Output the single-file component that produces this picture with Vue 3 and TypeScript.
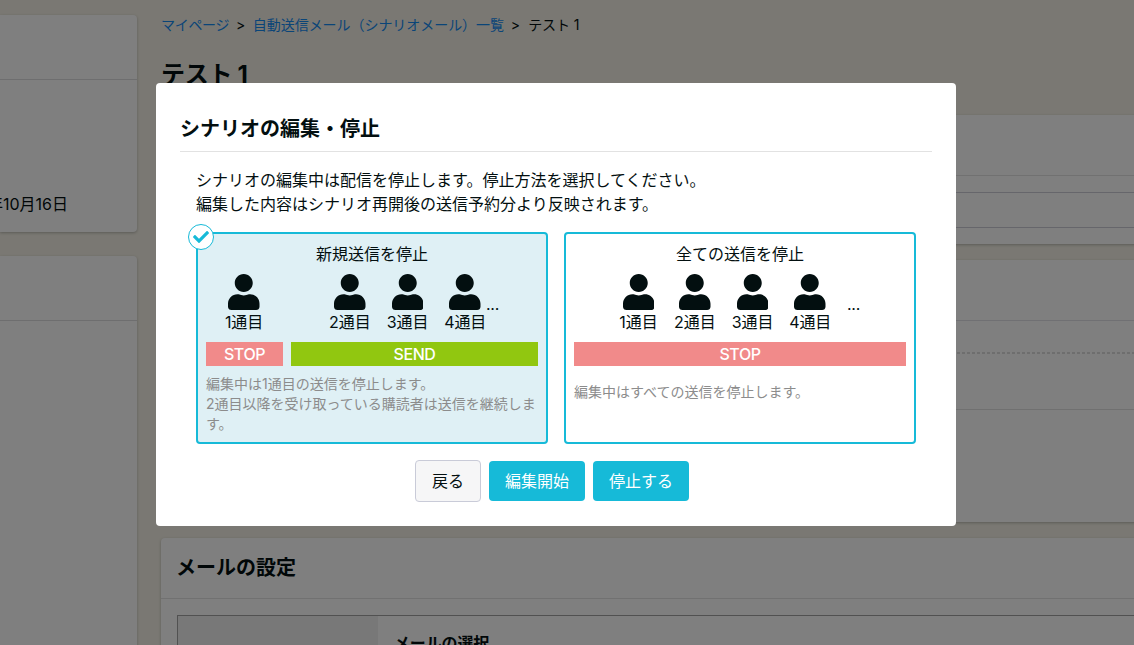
<script setup lang="ts">
interface StopOption {
  title: string
  note: string
  selected: boolean
  groups: { steps: number[]; bar: string; kind: 'stop' | 'send'; dots: boolean }[]
}

const options: StopOption[] = [
  {
    title: '新規送信を停止',
    note: '編集中は1通目の送信を停止します。\n2通目以降を受け取っている購読者は送信を継続します。',
    selected: true,
    groups: [
      { steps: [1], bar: 'STOP', kind: 'stop', dots: false },
      { steps: [2, 3, 4], bar: 'SEND', kind: 'send', dots: true },
    ],
  },
  {
    title: '全ての送信を停止',
    note: '編集中はすべての送信を停止します。',
    selected: false,
    groups: [{ steps: [1, 2, 3, 4], bar: 'STOP', kind: 'stop', dots: true }],
  },
]
</script>

<template>
  <div class="page">
    <aside class="sidebar">
      <section class="card side-first">
        <div class="side-head"></div>
        <p class="date">年10月16日</p>
      </section>
      <section class="card side-second">
        <div class="side-head"></div>
      </section>
    </aside>

    <main class="main">
      <nav class="crumbs">
        <a class="home">マイページ</a><span class="sep">&gt;</span><a class="list">自動送信メール（シナリオメール）一覧</a><span class="sep">&gt;</span><span>テスト 1</span>
      </nav>
      <h1 class="page-title">テスト 1</h1>
      <section class="card name-card">
        <div class="card-head"></div>
        <div class="field"></div>
      </section>
      <section class="card flow-card">
        <div class="flow-head"></div>
        <div class="flow-dash"></div>
        <div class="flow-row"></div>
      </section>
      <section class="card mail-card">
        <h2 class="card-head">メールの設定</h2>
        <div class="mail-table">
          <div class="mail-label"></div>
          <div class="mail-value">メールの選択</div>
        </div>
      </section>
    </main>

    <div class="overlay">
      <div class="modal">
        <h2 class="modal-title">シナリオの編集・停止</h2>
        <div class="modal-body">
          <p class="lead">シナリオの編集中は配信を停止します。停止方法を選択してください。<br />編集した内容はシナリオ再開後の送信予約分より反映されます。</p>
          <div class="options">
            <div v-for="o in options" :key="o.title" class="option" :class="{ selected: o.selected }">
              <span v-if="o.selected" class="badge">
                <svg viewBox="0 0 512 512" width="16" height="16"><path fill="currentColor" d="M173.898 439.404l-166.4-166.4c-9.997-9.997-9.997-26.206 0-36.204l36.203-36.204c9.997-9.998 26.207-9.998 36.204 0L192 312.69 432.095 72.596c9.997-9.997 26.207-9.997 36.204 0l36.203 36.204c9.997 9.997 9.997 26.206 0 36.204l-294.4 294.401c-9.998 9.997-26.207 9.997-36.204-.001z" /></svg>
              </span>
              <div class="option-title">{{ o.title }}</div>
              <div class="groups">
                <div v-for="g in o.groups" :key="g.bar" class="group" :class="{ wide: g.steps.length > 1 }">
                  <div class="people" :class="{ spaced: g.steps.length > 3 }">
                    <div class="steps">
                      <div v-for="n in g.steps" :key="n" class="step" :class="{ narrow: n === 1 }">
                        <svg viewBox="0 0 448 512" width="31.5" height="36"><path fill="currentColor" d="M224 256c70.7 0 128-57.3 128-128S294.7 0 224 0 96 57.3 96 128s57.3 128 128 128zm89.6 32h-16.7c-22.2 10.2-46.9 16-72.9 16s-50.6-5.8-72.9-16h-16.7C60.2 288 0 348.2 0 422.4V464c0 26.5 21.5 48 48 48h352c26.5 0 48-21.5 48-48v-41.6c0-74.2-60.2-134.4-134.4-134.4z" /></svg>
                        <span>{{ n }}通目</span>
                      </div>
                    </div>
                    <span v-if="g.dots" class="dots">...</span>
                  </div>
                  <div class="bar" :class="g.kind">{{ g.bar }}</div>
                </div>
              </div>
              <div class="note">{{ o.note }}</div>
            </div>
          </div>
        </div>
        <div class="actions">
          <button class="btn back">戻る</button>
          <button class="btn">編集開始</button>
          <button class="btn">停止する</button>
        </div>
      </div>
    </div>
  </div>
</template>

<style>
body {
  margin: 0;
  overflow: hidden;
}
</style>

<style scoped>
* {
  box-sizing: border-box;
}
.page {
  position: relative;
  display: flex;
  gap: 24px;
  width: 1134px;
  height: 645px;
  overflow: hidden;
  background: #f4f1e6;
  color: #030f10;
  font: 400 16px/24px Inter, 'Noto Sans CJK JP', sans-serif;
}
h1,
h2,
p {
  margin: 0;
}
.card {
  background: #fff;
  border-radius: 4px;
  box-shadow: 0 1px 3px rgba(0, 0, 0, 0.25);
}
.sidebar {
  flex: none;
  display: flex;
  flex-direction: column;
  gap: 24px;
  width: 137px;
  padding-top: 15px;
}
.side-first {
  height: 217px;
  flex: none;
}
.side-second {
  flex: none;
  height: 420px;
}
.side-first,
.side-second {
  border-top-left-radius: 0;
  border-bottom-left-radius: 0;
}
.side-head {
  height: 65px;
  border-bottom: 1px solid #dcdcdf;
}
.date {
  display: flex;
  justify-content: flex-end;
  width: 68px;
  margin-top: 112px;
  white-space: nowrap;
}
.main {
  flex: 1;
  min-width: 0;
}
.crumbs {
  display: flex;
  height: 24px;
  margin-top: 13px;
  font-size: 14px;
  white-space: nowrap;
}
.crumbs a {
  color: #148af0;
}
.crumbs .home {
  letter-spacing: -0.3px;
}
.crumbs .list {
  margin-left: 0.6px;
  letter-spacing: -0.05px;
}
.crumbs .sep {
  width: 23px;
  text-align: center;
}
.crumbs span:last-child {
  margin-left: 1.2px;
  letter-spacing: -0.1px;
}
.page-title {
  height: 36px;
  margin-top: 20px;
  font-size: 24px;
  line-height: 36px;
  font-weight: 700;
  letter-spacing: -0.3px;
}
.name-card {
  height: 129px;
  margin-top: 22px;
  margin-right: -8px;
}
.card-head {
  height: 61px;
  padding: 0 15px;
  border-bottom: 1px solid #e2e2e2;
  font-size: 20px;
  line-height: 60px;
  font-weight: 700;
}
.field {
  height: 36px;
  margin: 16px 0 0 16px;
  border: 1px solid #cdcdd6;
}
.flow-card {
  height: 262px;
  margin-top: 16px;
  margin-right: -8px;
}
.flow-head {
  height: 61px;
  border-bottom: 1px solid #e0e0e7;
}
.flow-dash {
  height: 33px;
  background: repeating-linear-gradient(90deg, #dcdcdc 0 3px, transparent 3px 5px) 1px 100% / 100% 2px no-repeat;
}
.flow-row {
  height: 56px;
  border-bottom: 1px solid #e0e0e0;
}
.mail-card {
  height: 200px;
  margin-top: 16px;
  margin-right: -8px;
}
.mail-table {
  display: flex;
  height: 120px;
  margin: 16px 0 0 16px;
  border: 1px solid #a2a2a2;
}
.mail-label {
  width: 200px;
  background: #f0f0f0;
}
.mail-value {
  padding: 15px 16px;
  font-weight: 700;
  letter-spacing: -0.15px;
}
.overlay {
  position: absolute;
  inset: 0;
  padding: 83px 0 0 156px;
  background: rgba(0, 0, 0, 0.5);
}
.modal {
  width: 800px;
  height: 443px;
  padding: 24px;
  border-radius: 4px;
  background: #fff;
}
.modal-title {
  height: 45px;
  border-bottom: 1px solid #e2e2e2;
  font-size: 20px;
  line-height: 44px;
  font-weight: 700;
}
.modal-body {
  padding: 16px 16px 0;
}
.lead {
  white-space: nowrap;
}
.options {
  display: grid;
  grid-template-columns: 1fr 1fr;
  gap: 16px;
  margin-top: 16px;
}
.option {
  position: relative;
  height: 212px;
  display: flex;
  flex-direction: column;
  padding: 8px;
  border: 2px solid #16bad8;
  border-radius: 4px;
}
.option.selected {
  background: #dff0f5;
}
.badge {
  position: absolute;
  left: -10px;
  top: -10px;
  display: flex;
  align-items: center;
  justify-content: center;
  width: 26px;
  height: 26px;
  border: 1px solid #16bad8;
  border-radius: 50%;
  background: #fff;
  color: #16bad8;
}
.option-title {
  text-align: center;
}
.groups {
  display: flex;
  gap: 8px;
  margin-top: 8px;
}
.group {
  width: 77px;
}
.group.wide {
  flex: 1;
}
.people {
  display: flex;
  justify-content: center;
  height: 60px;
  padding-right: 1px;
}
.people.spaced {
  gap: 16px;
}
.steps {
  display: flex;
  gap: 16px;
}
.step {
  display: flex;
  flex-direction: column;
  align-items: center;
  width: 41.7px;
  white-space: nowrap;
  letter-spacing: -0.1px;
}
.step.narrow {
  width: 39px;
}
.step svg {
  flex: none;
}
.dots {
  width: 13px;
  margin-top: 18px;
  letter-spacing: -0.3px;
}
.bar {
  height: 24px;
  margin-top: 8px;
  color: #fff;
  font-weight: 500;
  letter-spacing: -0.45px;
  text-align: center;
}
.bar.stop {
  background: #f18a8a;
}
.bar.send {
  background: #91c710;
}
.note {
  flex: 1;
  margin-top: 8px;
  color: #8c8c8c;
  font-size: 14px;
  line-height: 20px;
  white-space: pre-line;
}
.option:not(.selected) .note {
  padding-top: 8px;
}
.actions {
  display: flex;
  align-items: center;
  justify-content: center;
  gap: 8px;
  margin-top: 16px;
  padding-right: 8px;
}
.btn {
  height: 40px;
  padding: 0 16px;
  border: 0;
  border-radius: 4px;
  background: #16bad8;
  color: #fff;
  font: inherit;
}
.btn.back {
  height: 42px;
  border: 1px solid #c9cbd8;
  background: #f6f6f7;
  color: #030f10;
}
</style>
